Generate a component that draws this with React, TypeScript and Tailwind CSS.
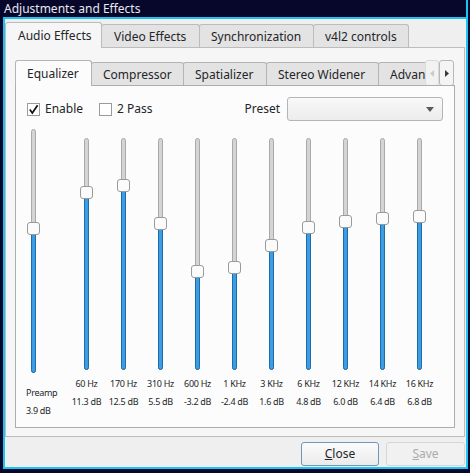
import React from 'react';

const bands = [
  { f: '60 Hz', db: 11.3 },
  { f: '170 Hz', db: 12.5 },
  { f: '310 Hz', db: 5.5 },
  { f: '600 Hz', db: -3.2 },
  { f: '1 KHz', db: -2.4 },
  { f: '3 KHz', db: 1.6 },
  { f: '6 KHz', db: 4.8 },
  { f: '12 KHz', db: 6.0 },
  { f: '14 KHz', db: 6.4 },
  { f: '16 KHz', db: 6.8 },
];

// vertical slider, range -20..+20 dB
const Slider = ({ h, db, className }: { h: number; db: number; className: string }) => {
  const top = Math.round(((20 - db) / 40) * (h - 13));
  return (
    <div className={`relative w-[13px] ${className}`}>
      <div className="absolute left-[4px] top-0 bottom-0 w-[5px] rounded-full border border-[#a9a9a9] bg-[#d4d4d4]" />
      <div
        className="absolute left-[4px] bottom-0 w-[5px] rounded-full border border-[#1d6cab] bg-[#3d9de2]"
        style={{ top: top + 6 }}
      />
      <div
        className="absolute left-0 h-[13px] w-[13px] rounded-[3px] border border-[#9a9a9a] bg-[#fbfbfb]"
        style={{ top }}
      />
    </div>
  );
};

const Check = ({ checked }: { checked?: boolean }) => (
  <div className="flex h-[13px] w-[13px] items-center justify-center border border-[#9b9b9b] bg-white">
    {checked && (
      <svg width="11" height="11" viewBox="0 0 11 11">
        <path d="M1.8 5.6 L4.3 9 L9.6 1.2" fill="none" stroke="#111" strokeWidth="1.7" />
      </svg>
    )}
  </div>
);

const App = () => {
  return (
    <div className="flex h-[473px] w-[470px] flex-col overflow-hidden bg-[#07072b] font-['Noto_Sans',sans-serif] text-[12px] text-[#232629]">
      {/* Title bar */}
      <div className="flex h-[17px]">
        <div className="flex-1 pl-[4px] leading-[17px] text-[#e8e8f0]">Adjustments and Effects</div>
        <div className="w-[2px] bg-[#1cc4f2]" />
        <div className="w-[2px]" />
      </div>

      {/* Window body */}
      <div className="ml-[3px] flex h-[452px] w-[465px] flex-col border-2 border-[#1cc4f2] bg-[#efefef] pt-[3px] pr-[1px]">
        {/* Outer tabs */}
        <div className="flex h-[26px] items-end">
          <div className="relative z-10 flex h-[26px] w-[97px] items-center rounded-t-[3px] border border-b-0 border-[#bcbcbc] bg-[#f6f6f6] pl-[12px]">
            Audio Effects
          </div>
          <div className="-ml-px flex h-[24px] w-[99px] items-center rounded-t-[3px] border border-b-0 border-[#bcbcbc] bg-[#e3e3e3] pl-[12px]">
            Video Effects
          </div>
          <div className="-ml-px flex h-[24px] w-[115px] items-center rounded-t-[3px] border border-b-0 border-[#bcbcbc] bg-[#e3e3e3] pl-[11px]">
            Synchronization
          </div>
          <div className="-ml-px flex h-[24px] w-[96px] items-center rounded-t-[3px] border border-b-0 border-[#bcbcbc] bg-[#e3e3e3] pl-[11px]">
            v4l2 controls
          </div>
        </div>

        {/* Outer panel */}
        <div className="-mt-px flex h-[390px] flex-col border border-[#bcbcbc] bg-[#f6f6f6] px-[9px] pt-[12px]">
          {/* Inner tabs */}
          <div className="flex h-[26px] items-end">
            <div className="flex h-[26px] w-[410px] items-end overflow-hidden">
              <div className="relative z-10 flex h-[26px] w-[77px] shrink-0 items-center rounded-t-[3px] border border-b-0 border-[#b4b4b4] bg-[#fcfcfc] pl-[11px]">
                Equalizer
              </div>
              <div className="-ml-px flex h-[24px] w-[93px] shrink-0 items-center rounded-t-[3px] border border-b-0 border-[#b4b4b4] bg-[#e3e3e3] pl-[11px]">
                Compressor
              </div>
              <div className="-ml-px flex h-[24px] w-[84px] shrink-0 items-center rounded-t-[3px] border border-b-0 border-[#b4b4b4] bg-[#e3e3e3] pl-[11px]">
                Spatializer
              </div>
              <div className="-ml-px flex h-[24px] w-[113px] shrink-0 items-center rounded-t-[3px] border border-b-0 border-[#b4b4b4] bg-[#e3e3e3] pl-[11px]">
                Stereo Widener
              </div>
              <div className="-ml-px flex h-[24px] w-[90px] shrink-0 items-center rounded-t-[3px] border border-b-0 border-[#b4b4b4] bg-[#e3e3e3] pl-[11px]">
                Advanced
              </div>
            </div>
            <div className="flex h-[26px] w-[14px] items-center justify-center rounded-[3px] border border-[#dadada] bg-[#f2f2f2]">
              <svg width="4" height="7" viewBox="0 0 4 7">
                <path d="M4 0 L0 3.5 L4 7 Z" fill="#c9c9c9" />
              </svg>
            </div>
            <div className="flex h-[26px] w-[15px] items-center justify-center rounded-[3px] border border-[#b8b8b8] bg-[#f4f4f4]">
              <svg width="4" height="7" viewBox="0 0 4 7">
                <path d="M0 0 L4 3.5 L0 7 Z" fill="#3a3a3a" />
              </svg>
            </div>
          </div>

          {/* Inner panel */}
          <div className="-mt-px flex h-[343px] flex-col border border-[#adadad] bg-[#fcfcfc]">
            <div className="mt-[11px] flex h-[24px] items-center px-[11px]">
              <Check checked />
              <span className="ml-[5px]">Enable</span>
              <div className="ml-[16px]">
                <Check />
              </div>
              <span className="ml-[5px]">2 Pass</span>
              <span className="ml-auto mr-[7px]">Preset</span>
              <div className="relative h-[24px] w-[156px] rounded-[3px] border border-[#b5b5b5] bg-gradient-to-b from-[#f9f9f9] to-[#ececec]">
                <svg className="absolute right-[8px] top-[9px]" width="8" height="5" viewBox="0 0 8 5">
                  <path d="M0 0 L8 0 L4 5 Z" fill="#5a5a5a" />
                </svg>
              </div>
            </div>

            <div className="mt-[8px] flex items-start">
              {/* Preamp */}
              <div className="flex w-[52px] flex-col">
                <Slider h={244} db={3.9} className="ml-[11px] h-[244px]" />
                <div className="mt-[11px] pl-[10px] text-[9px] leading-[18px] tracking-[-0.3px]">
                  <div>Preamp</div>
                  <div>3.9 dB</div>
                </div>
              </div>

              {bands.map((b) => (
                <div key={b.f} className="flex w-[37px] flex-col items-center">
                  <Slider h={232} db={b.db} className="mt-[9px] h-[232px]" />
                  <div className="mt-[5px] text-center text-[9px] leading-[18px] tracking-[-0.3px] whitespace-nowrap">
                    <div>{b.f}</div>
                    <div>{b.db.toFixed(1)} dB</div>
                  </div>
                </div>
              ))}
            </div>
          </div>
        </div>

        {/* Buttons */}
        <div className="mt-[5px] flex h-[24px] justify-end gap-[7px]">
          <div className="flex h-[24px] w-[78px] items-center justify-center rounded-[3px] border border-[#6b98bc] bg-gradient-to-b from-[#fbfbfb] to-[#ebebeb]">
            <span>
              <span className="underline">C</span>lose
            </span>
          </div>
          <div className="flex h-[24px] w-[79px] items-center justify-center rounded-[3px] border border-[#d6d6d6] bg-[#f1f1f1] text-[#ababab]">
            <span>
              <span className="underline">S</span>ave
            </span>
          </div>
        </div>
      </div>
    </div>
  );
};

export default App;
